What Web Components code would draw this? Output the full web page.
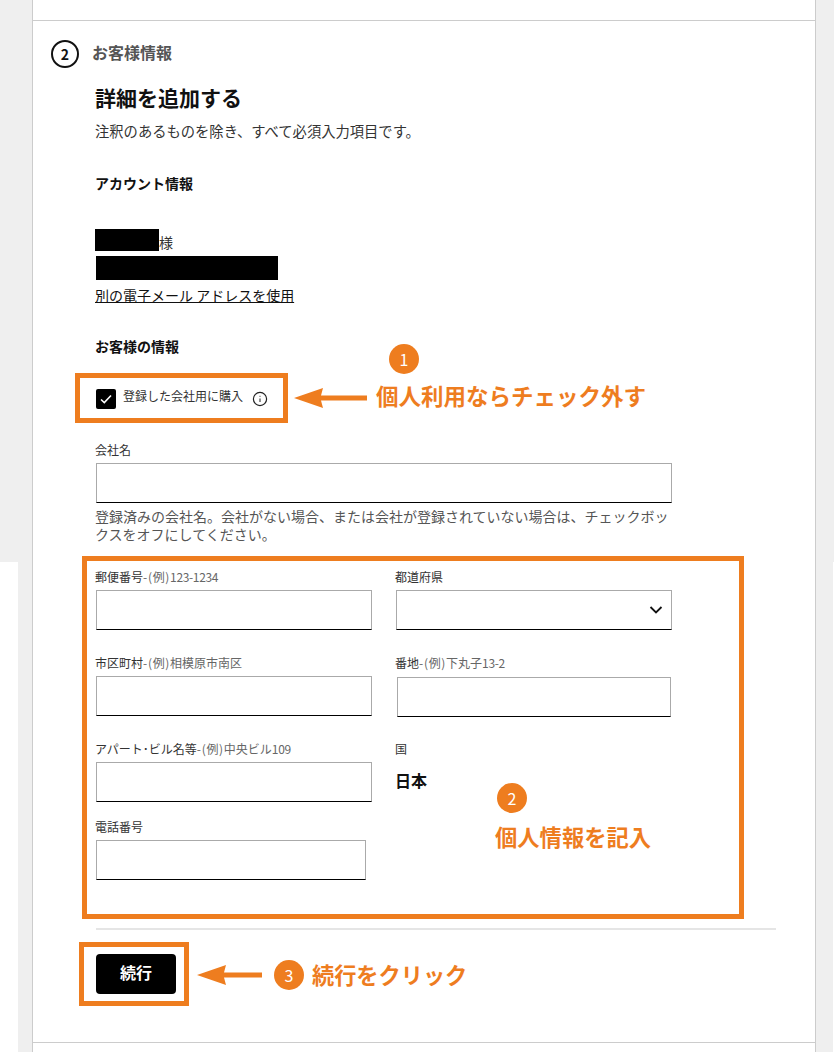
<!DOCTYPE html>
<html lang="ja">
<head>
<meta charset="utf-8">
<title>お客様情報</title>
<style>
    html, body { margin: 0; padding: 0; }
    body {
        width: 834px;
        height: 1052px;
        overflow: hidden;
        background: #efefef;
        font-family: "Noto Sans CJK JP", "Noto Sans", sans-serif;
        color: #111;
    }
</style>
</head>
<body>
<checkout-page>
    <checkout-step number="2" title="お客様情報">
        <section-intro title="詳細を追加する" note="注釈のあるものを除き、すべて必須入力項目です。"></section-intro>
        <account-info email-link="別の電子メール アドレスを使用"></account-info>
        <company-block></company-block>
        <address-form></address-form>
        <continue-bar label="続行"></continue-bar>
    </checkout-step>

    <note-frame x="75" y="373" w="213" h="50"></note-frame>
    <note-frame x="82" y="556" w="662" h="363"></note-frame>
    <note-frame x="79" y="942" w="110" h="64"></note-frame>

    <note-arrow x="294" y="388" w="73"></note-arrow>
    <note-arrow x="197" y="965" w="65"></note-arrow>

    <note-badge x="389" y="344">1</note-badge>
    <note-badge x="497" y="783">2</note-badge>
    <note-badge x="274" y="960">3</note-badge>

    <note-text x="376" y="379" size="22.5">個人利用ならチェック外す</note-text>
    <note-text x="495" y="820" size="22.3">個人情報を記入</note-text>
    <note-text x="312" y="958" size="22.2">続行をクリック</note-text>
</checkout-page>

<script>
// Page shell: grey gutters, white panel and the white patches on the edges
class CheckoutPage extends HTMLElement {
    constructor() {
        super();
        this.attachShadow({ mode: 'open' });
    }

    connectedCallback() {
        this.shadowRoot.innerHTML = `
            <style>
                :host {
                    display: block;
                    position: relative;
                    width: 834px;
                    height: 1052px;
                }
                .patch {
                    position: absolute;
                    left: 0;
                    top: 562px;
                    width: 18px;
                    height: 490px;
                    background: #fff;
                }
                .patch.right { left: 833px; width: 1px; }
                .panel {
                    box-sizing: border-box;
                    width: 784px;
                    height: 1052px;
                    margin-left: 32px;
                    background: #fff;
                    border-left: 1px solid #ccc;
                    border-right: 1px solid #ccc;
                    padding-top: 20px;
                }
            </style>
            <div class="patch"></div>
            <div class="patch right"></div>
            <div class="panel"><slot></slot></div>
        `;
    }
}

class CheckoutStep extends HTMLElement {
    constructor() {
        super();
        this.attachShadow({ mode: 'open' });
    }

    connectedCallback() {
        const number = this.getAttribute('number');
        const title = this.getAttribute('title');
        this.removeAttribute('title');
        this.shadowRoot.innerHTML = `
            <style>
                :host {
                    display: block;
                    border-top: 1px solid #ccc;
                    border-bottom: 1px solid #ccc;
                    padding: 19px 0 48px 0;
                }
                .head {
                    display: flex;
                    align-items: center;
                    gap: 13px;
                    padding-left: 18px;
                    height: 28px;
                }
                .circle {
                    box-sizing: border-box;
                    width: 28px;
                    height: 28px;
                    border: 2px solid #111;
                    border-radius: 50%;
                    display: flex;
                    align-items: center;
                    justify-content: center;
                    font-size: 14px;
                    font-weight: 700;
                }
                .name {
                    font-size: 16px;
                    font-weight: 700;
                    color: #555;
                    margin-top: -4px;
                }
                .body { padding-left: 63px; }
            </style>
            <div class="head">
                <span class="circle">${number}</span>
                <span class="name">${title}</span>
            </div>
            <div class="body"><slot></slot></div>
        `;
    }
}

class SectionIntro extends HTMLElement {
    constructor() {
        super();
        this.attachShadow({ mode: 'open' });
    }

    connectedCallback() {
        const title = this.getAttribute('title');
        const note = this.getAttribute('note');
        this.removeAttribute('title');
        this.shadowRoot.innerHTML = `
            <style>
                :host { display: block; padding-top: 17px; }
                h2 {
                    margin: -2px 0 0 -1px;
                    padding-bottom: 2px;
                    font-size: 21px;
                    line-height: 28px;
                    font-weight: 700;
                    color: #111;
                }
                p {
                    margin: 8px 0 0 -1px;
                    padding-bottom: 1px;
                    font-size: 14.3px;
                    line-height: 20px;
                    color: #333;
                }
            </style>
            <h2>${title}</h2>
            <p>${note}</p>
        `;
    }
}

class AccountInfo extends HTMLElement {
    constructor() {
        super();
        this.attachShadow({ mode: 'open' });
    }

    connectedCallback() {
        const link = this.getAttribute('email-link');
        this.shadowRoot.innerHTML = `
            <style>
                :host { display: block; padding-top: 32px; }
                h3 {
                    margin: -1px 0 35px -1px;
                    padding-bottom: 1px;
                    font-size: 14px;
                    line-height: 20px;
                    font-weight: 700;
                }
                .name {
                    display: flex;
                    align-items: flex-end;
                    height: 22px;
                    margin-left: -1px;
                    font-size: 14px;
                    line-height: 18px;
                    color: #333;
                }
                .name i { width: 64px; height: 22px; background: #000; }
                .mail { width: 182px; height: 24px; margin-top: 5px; background: #000; }
                a {
                    display: block;
                    margin: 5px 0 0 -1px;
                    padding-bottom: 1px;
                    font-size: 14px;
                    line-height: 20px;
                    color: #111;
                    text-decoration: underline;
                }
            </style>
            <h3>アカウント情報</h3>
            <div class="name"><i></i><span>様</span></div>
            <div class="mail"></div>
            <a href="#">${link}</a>
        `;
    }
}

class CompanyBlock extends HTMLElement {
    constructor() {
        super();
        this.attachShadow({ mode: 'open' });
    }

    connectedCallback() {
        this.shadowRoot.innerHTML = `
            <style>
                :host { display: block; padding-top: 31px; }
                h3 {
                    margin: -1px 0 0 -1px;
                    padding-bottom: 1px;
                    font-size: 14px;
                    line-height: 20px;
                    font-weight: 700;
                }
                .check {
                    display: flex;
                    align-items: flex-start;
                    height: 22px;
                    margin-top: 30px;
                    gap: 7px;
                    font-size: 12px;
                    line-height: 20px;
                    color: #333;
                }
                .box {
                    width: 20px;
                    height: 20px;
                    margin-top: 2px;
                    border-radius: 2px;
                    background: #000;
                }
                .box svg { display: block; }
                .label { margin-top: -1px; }
                .info { margin: 4px 0 0 2px; display: block; }
                text-field { margin-top: 32px; }
                p {
                    margin: 4px 0 0 -1px;
                    padding-bottom: 1px;
                    width: 577px;
                    font-size: 14px;
                    line-height: 18px;
                    color: #555;
                }
            </style>
            <h3>お客様の情報</h3>
            <div class="check">
                <span class="box">
                    <svg width="20" height="20" viewBox="0 0 20 20" fill="none" stroke="#fff" stroke-width="1.6">
                        <path d="M5 10.5 L8.3 13.6 L15 6.5"/>
                    </svg>
                </span>
                <span class="label">登録した会社用に購入</span>
                <svg class="info" width="16" height="16" viewBox="0 0 16 16" fill="none" stroke="#222" stroke-width="1.2">
                    <circle cx="8" cy="8" r="6.6"/>
                    <path d="M8 7.6 V11" stroke="#444" stroke-width="1.2"/>
                    <path d="M8 4.8 V5.9" stroke="#777" stroke-width="1.2"/>
                </svg>
            </div>
            <text-field label="会社名" width="576"></text-field>
            <p>登録済みの会社名。会社がない場合、または会社が登録されていない場合は、チェックボックスをオフにしてください。</p>
        `;
    }
}

// Label plus a boxed input: grey on three sides, black underline
class TextField extends HTMLElement {
    constructor() {
        super();
        this.attachShadow({ mode: 'open' });
    }

    connectedCallback() {
        const label = this.getAttribute('label') || '';
        const hint = this.getAttribute('hint') || '';
        const width = this.getAttribute('width') || 276;
        const nudged = this.hasAttribute('nudged');
        // "-(例)" runs wider and digits narrower in the reference
        const hintHtml = hint
            .replace('-(例)', '<span class="wide">-(例)</span>')
            .replace(/[\d-]+(?=$)/, m => `<span class="tight">${m}</span>`);
        const chevron = this.hasAttribute('select') ? `
            <svg class="chevron" width="14" height="10" viewBox="0 0 14 10" fill="none" stroke="#111" stroke-width="1.8">
                <path d="M1.5 2 L7 7.5 L12.5 2"/>
            </svg>` : '';
        this.shadowRoot.innerHTML = `
            <style>
                :host { display: block; }
                label {
                    display: block;
                    height: 18px;
                    margin: 0 0 ${nudged ? 5 : 4}px -1px;
                    font-size: 12px;
                    line-height: 18px;
                    color: #333;
                    white-space: nowrap;
                }
                label > span { color: #666; }
                .wide { letter-spacing: .7px; }
                .tight { letter-spacing: -.35px; }
                .box {
                    position: relative;
                    box-sizing: border-box;
                    width: ${nudged ? width - 2 : width}px;
                    height: 40px;
                    margin: ${nudged ? '0 1px -1px' : '0'};
                    background: #fff;
                    border: 1px solid #aaa;
                    border-bottom: 1px solid #000;
                }
                input {
                    display: block;
                    box-sizing: border-box;
                    width: 100%;
                    height: 100%;
                    border: 0;
                    padding: 0 8px;
                    background: transparent;
                    outline: none;
                }
                .chevron {
                    position: absolute;
                    right: 8px;
                    top: 14px;
                }
            </style>
            <label>${label}<span>${hintHtml}</span></label>
            <div class="box"><input type="text">${chevron}</div>
        `;
    }
}

class AddressForm extends HTMLElement {
    constructor() {
        super();
        this.attachShadow({ mode: 'open' });
    }

    connectedCallback() {
        this.shadowRoot.innerHTML = `
            <style>
                :host { display: block; padding-top: 24px; }
                .grid {
                    display: grid;
                    grid-template-columns: 276px 276px;
                    column-gap: 24px;
                    row-gap: 24px;
                }
                .phone { margin-top: 16px; }
                .label {
                    margin-left: -1px;
                    font-size: 12px;
                    line-height: 18px;
                    color: #333;
                }
                .value {
                    margin: 10px 0 0 -1px;
                    font-size: 16px;
                    line-height: 24px;
                    font-weight: 700;
                    color: #111;
                }
            </style>
            <div class="grid">
                <text-field label="郵便番号" hint="-(例)123-1234"></text-field>
                <text-field label="都道府県" select></text-field>
                <text-field label="市区町村" hint="-(例)相模原市南区"></text-field>
                <text-field label="番地" hint="-(例)下丸子13-2" nudged></text-field>
                <text-field label="アパート･ビル名等" hint="-(例)中央ビル109"></text-field>
                <div>
                    <div class="label">国</div>
                    <div class="value">日本</div>
                </div>
            </div>
            <text-field class="phone" label="電話番号" width="270"></text-field>
        `;
    }
}

class ContinueBar extends HTMLElement {
    constructor() {
        super();
        this.attachShadow({ mode: 'open' });
    }

    connectedCallback() {
        const label = this.getAttribute('label');
        this.shadowRoot.innerHTML = `
            <style>
                :host { display: block; padding-top: 48px; }
                hr {
                    width: 680px;
                    height: 2px;
                    margin: 0 0 24px;
                    border: 0;
                    background: #e5e5e5;
                }
                button {
                    display: block;
                    width: 80px;
                    height: 40px;
                    padding: 0 0 4px;
                    border: 0;
                    border-radius: 4px;
                    background: #000;
                    color: #fff;
                    font: inherit;
                    font-size: 16px;
                    font-weight: 700;
                }
            </style>
            <hr>
            <button type="button">${label}</button>
        `;
    }
}

// Annotations drawn over the screenshot
const NOTE_ORANGE = '#ee7d1f';

class NoteFrame extends HTMLElement {
    constructor() {
        super();
        this.attachShadow({ mode: 'open' });
    }

    connectedCallback() {
        const a = n => this.getAttribute(n);
        this.shadowRoot.innerHTML = `
            <style>
                :host {
                    display: block;
                    position: absolute;
                    box-sizing: border-box;
                    left: ${a('x')}px;
                    top: ${a('y')}px;
                    width: ${a('w')}px;
                    height: ${a('h')}px;
                    border: 5px solid ${NOTE_ORANGE};
                    pointer-events: none;
                }
            </style>
        `;
    }
}

class NoteArrow extends HTMLElement {
    constructor() {
        super();
        this.attachShadow({ mode: 'open' });
    }

    connectedCallback() {
        const x = this.getAttribute('x');
        const y = this.getAttribute('y');
        const w = Number(this.getAttribute('w'));
        this.shadowRoot.innerHTML = `
            <style>
                :host { position: absolute; left: ${x}px; top: ${y}px; display: block; line-height: 0; }
            </style>
            <svg width="${w}" height="20" viewBox="0 0 ${w} 20" fill="${NOTE_ORANGE}">
                <path d="M0 10 L29 0 L27 7.5 L${w} 7.5 L${w} 12.5 L27 12.5 L29 20 Z"/>
            </svg>
        `;
    }
}

class NoteBadge extends HTMLElement {
    constructor() {
        super();
        this.attachShadow({ mode: 'open' });
    }

    connectedCallback() {
        const x = this.getAttribute('x');
        const y = this.getAttribute('y');
        this.shadowRoot.innerHTML = `
            <style>
                :host {
                    position: absolute;
                    left: ${x}px;
                    top: ${y}px;
                    width: 30px;
                    height: 30px;
                    border-radius: 50%;
                    background: ${NOTE_ORANGE};
                    color: #fff;
                    display: flex;
                    align-items: center;
                    justify-content: center;
                    font-size: 16px;
                }
            </style>
            <slot></slot>
        `;
    }
}

class NoteText extends HTMLElement {
    constructor() {
        super();
        this.attachShadow({ mode: 'open' });
    }

    connectedCallback() {
        const x = this.getAttribute('x');
        const y = this.getAttribute('y');
        const size = this.getAttribute('size');
        this.shadowRoot.innerHTML = `
            <style>
                :host {
                    position: absolute;
                    left: ${x}px;
                    top: ${y}px;
                    font-size: ${size}px;
                    line-height: 32px;
                    font-weight: 700;
                    color: ${NOTE_ORANGE};
                    white-space: nowrap;
                }
            </style>
            <slot></slot>
        `;
    }
}

customElements.define('checkout-page', CheckoutPage);
customElements.define('checkout-step', CheckoutStep);
customElements.define('section-intro', SectionIntro);
customElements.define('account-info', AccountInfo);
customElements.define('company-block', CompanyBlock);
customElements.define('text-field', TextField);
customElements.define('address-form', AddressForm);
customElements.define('continue-bar', ContinueBar);
customElements.define('note-frame', NoteFrame);
customElements.define('note-arrow', NoteArrow);
customElements.define('note-badge', NoteBadge);
customElements.define('note-text', NoteText);
</script>
</body>
</html>
